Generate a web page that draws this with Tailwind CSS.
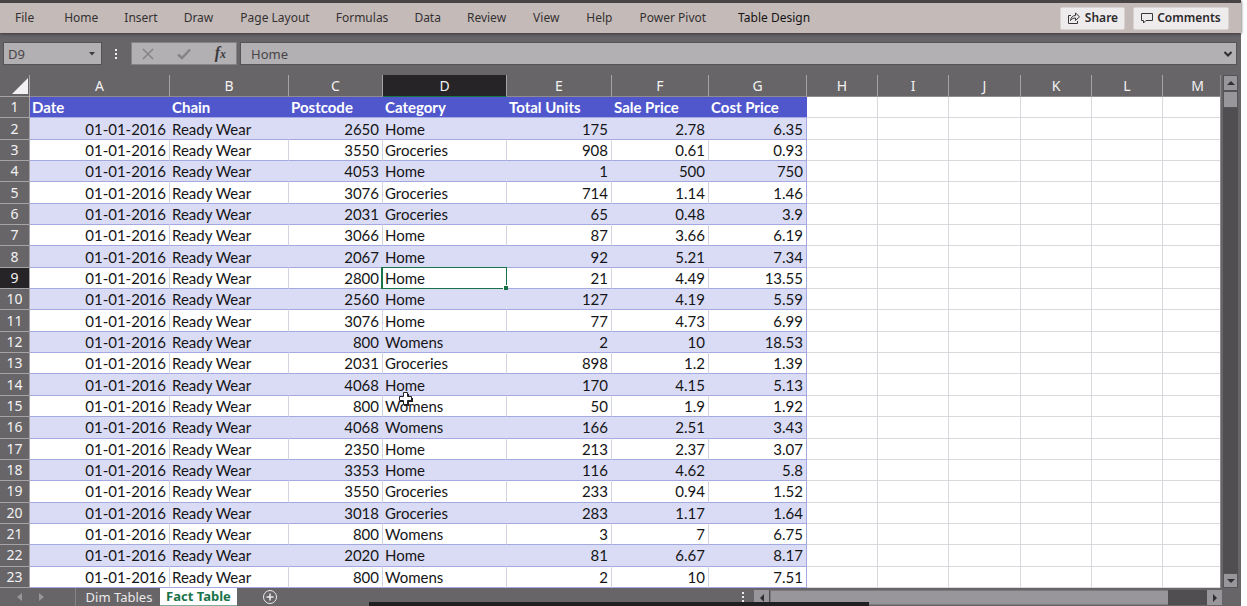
<!DOCTYPE html>
<html lang="en">
<head>
<meta charset="utf-8">
<title>Fact Table</title>
<script src="https://cdn.jsdelivr.net/npm/@tailwindcss/browser@4"></script>
</head>
<body class="h-screen overflow-hidden bg-white pr-1.5 font-['Noto_Sans',sans-serif]">
<div class="relative flex h-full flex-col bg-[#676567]">
  <header class="flex h-[33px] shrink-0 items-center border-t-3 border-[#484446] bg-[#c4bbb8] pr-3 pl-[15px] text-xs text-[#353132] shadow-[0_1px_3px_#3b393b]">
    <nav class="flex flex-1 items-center gap-[26px] whitespace-nowrap" aria-label="Ribbon">
      <a href="#" class="mr-1">File</a>
      <a href="#">Home</a>
      <a href="#">Insert</a>
      <a href="#">Draw</a>
      <a href="#" class="ml-px">Page Layout</a>
      <a href="#">Formulas</a>
      <a href="#">Data</a>
      <a href="#">Review</a>
      <a href="#" class="ml-px">View</a>
      <a href="#" class="ml-px">Help</a>
      <a href="#" class="ml-px">Power Pivot</a>
      <a href="#" class="ml-1.5 text-[#151314]">Table Design</a>
    </nav>
    <div class="flex gap-2 font-semibold text-[#2c292b]">
      <button class="flex h-[23px] w-[65px] items-center justify-center gap-1 rounded-xs border border-[#d8d2d0] bg-[#edebeb]">
        <svg class="size-3.5" viewBox="0 0 14 14" fill="none" stroke="#3a3739" stroke-width="1"><path d="M4 4.500H1.500v8h9V10"/><path d="M3.500 9.500C4 6 6 4.500 8.500 4.500V2l4 3.800-4 3.700V7C6.500 7 5 7.500 3.500 9.500z"/></svg>
        Share
      </button>
      <button class="flex h-[23px] w-24 items-center justify-center gap-1 rounded-xs border border-[#d8d2d0] bg-[#edebeb]">
        <svg class="size-3" viewBox="0 0 12 12" fill="none" stroke="#3a3739" stroke-width="1"><path d="M.5 1.500h11v7H5l-2.500 2.500V8.500h-2z"/></svg>
        Comments
      </button>
    </div>
  </header>

  <div class="mt-[9px] mb-[10px] flex h-[23px] shrink-0 items-stretch pr-1 pl-[3px] text-[13px] text-[#474547]">
    <div class="flex w-[99px] items-center border border-[#555355] bg-[#b2b0b3] pr-1">
      <input aria-label="Name box" value="D9" class="w-0 flex-1 bg-transparent pt-0.5 pl-1 outline-none">
      <button aria-label="Choose name" class="p-0.5"><svg class="h-1 w-1.5" viewBox="0 0 6 4" fill="#3f3d3f"><path d="M0 0h6L3 3.500z"/></svg></button>
    </div>
    <div class="flex w-[27px] items-center justify-center"><svg class="h-3 w-1" viewBox="0 0 4 12" fill="#f2f0f2"><path d="M1 1h2v2H1zM1 5h2v2H1zM1 9h2v2H1z"/></svg></div>
    <div class="ml-[2px] flex w-[106px] items-center justify-between border border-[#858386] bg-[#b2b0b3] px-2.5">
      <button aria-label="Cancel"><svg class="size-3" viewBox="0 0 12 12" fill="none" stroke="#858386" stroke-width="1.500"><path d="M1 1l10 10M11 1L1 11"/></svg></button>
      <button aria-label="Enter"><svg class="h-3 w-3.5" viewBox="0 0 14 12" fill="none" stroke="#858386" stroke-width="2.500"><path d="M1 6.500l4 3.500L13 1.500"/></svg></button>
      <button aria-label="Insert function" class="font-['Liberation_Serif',serif] text-base leading-4 font-bold text-[#3b393b] italic">f<span class="text-xs">x</span></button>
    </div>
    <div class="ml-[3px] flex flex-1 items-center border border-[#555355] bg-[#b2b0b3] pr-1">
      <input aria-label="Formula bar" value="Home" class="w-0 flex-1 bg-transparent pt-0.5 pl-2.5 outline-none">
      <button aria-label="Expand formula bar"><svg class="h-1.5 w-2" viewBox="0 0 8 6" fill="none" stroke="#302e30" stroke-width="2"><path d="M.5 1L4 4.500 7.500 1"/></svg></button>
    </div>
  </div>

  <main class="flex min-h-0 flex-1">
    <div class="relative min-w-0 flex-1 overflow-hidden border-r border-[#8e8c8e]">
      <table class="h-full w-[1233px] table-fixed border-separate border-spacing-0 font-[Lato,sans-serif] text-[15px] leading-5 text-[#151517]">
        <colgroup>
          <col class="w-[30px]"><col class="w-[140px]"><col class="w-[119px]"><col class="w-[94px]"><col class="w-[124px]"><col class="w-[105px]"><col class="w-[97px]"><col class="w-[98px]"><col class="w-[71px]"><col class="w-[71px]"><col class="w-[72px]"><col class="w-[71px]"><col class="w-[71px]"><col class="w-[70px]">
        </colgroup>
        <thead class="font-['Noto_Sans',sans-serif] text-sm text-[#f3f1f3]"><tr id="letters"></tr></thead>
        <tbody id="rows"></tbody>
      </table>
      <svg class="absolute top-[316px] left-[398px] size-4" viewBox="0 0 16 16" aria-hidden="true"><path d="M6 3h5v4h4v4h-4v4H6v-4H2V7h4z" fill="#222"/><path d="M5.500 1.500h4v4h4v4h-4v4h-4v-4h-4v-4h4z" fill="#fff" stroke="#222"/></svg>
    </div>
    <div class="mr-[3px] ml-[2px] flex w-[15px] flex-col bg-[#504e50]">
      <button aria-label="Scroll up" class="flex h-4 items-center justify-center bg-[#98969a] ring-1 ring-[#555355] ring-inset"><svg class="h-1 w-2" viewBox="0 0 8 4" fill="#302e30"><path d="M0 4h8L4 0z"/></svg></button>
      <div class="h-[17px] border border-[#555355] bg-[#98969a]"></div>
      <div class="flex-1"></div>
      <button aria-label="Scroll down" class="flex h-[15px] items-center justify-center bg-[#98969a] ring-1 ring-[#555355] ring-inset"><svg class="h-1 w-2" viewBox="0 0 8 4" fill="#302e30"><path d="M0 0h8L4 4z"/></svg></button>
    </div>
  </main>

  <footer class="flex h-[18px] shrink-0 items-stretch pr-[19px] text-[13px] text-[#ebe9eb]">
    <div class="flex w-[76px] items-center gap-4 border-r border-[#858386] pl-[17px]">
      <button aria-label="Previous sheet"><svg class="h-2 w-1.5" viewBox="0 0 6 8" fill="#98969a"><path d="M5 0v8L0 4z"/></svg></button>
      <button aria-label="Next sheet"><svg class="h-2 w-1.5" viewBox="0 0 6 8" fill="#98969a"><path d="M0 0v8l5-4z"/></svg></button>
    </div>
    <button class="w-[84px] pb-px pl-[2px] leading-[16px] whitespace-nowrap">Dim Tables</button>
    <button class="w-[77px] border-b border-[#7fae98] bg-white pb-px leading-[16px] font-bold whitespace-nowrap text-[#1a7348]">Fact Table</button>
    <button aria-label="New sheet" class="ml-[25px] flex items-center"><svg class="size-4" viewBox="0 0 16 16" fill="none" stroke="#ebe9eb"><circle cx="8" cy="8" r="6.500"/><path d="M8 4.500v7M4.500 8h7" stroke-width="1.500"/></svg></button>
    <div class="flex-1"></div>
    <div class="flex w-[13px] items-center"><svg class="h-3 w-1" viewBox="0 0 4 12" fill="#ebe9eb"><path d="M1 1h2v2H1zM1 5h2v2H1zM1 9h2v2H1z"/></svg></div>
    <div class="mt-[2px] mb-[1px] flex w-[468px] bg-[#504e50]">
      <button aria-label="Scroll left" class="flex w-4 items-center justify-center border-r border-[#504e50] bg-[#98969a]"><svg class="h-2 w-1" viewBox="0 0 4 8" fill="#302e30"><path d="M4 0v8L0 4z"/></svg></button>
      <div class="w-[398px] border border-r-0 border-[#7b797c] bg-[#98969a]"></div>
      <div class="flex-1"></div>
      <button aria-label="Scroll right" class="flex w-[15px] items-center justify-center bg-[#98969a]"><svg class="h-2 w-1" viewBox="0 0 4 8" fill="#302e30"><path d="M0 0v8l4-4z"/></svg></button>
    </div>
  </footer>
  <div class="absolute bottom-0 left-[369px] h-1 w-[500px] bg-[#211f21]"></div>
</div>
<script>
const data = `2650 Home 175 2.78 6.35
3550 Groceries 908 0.61 0.93
4053 Home 1 500 750
3076 Groceries 714 1.14 1.46
2031 Groceries 65 0.48 3.9
3066 Home 87 3.66 6.19
2067 Home 92 5.21 7.34
2800 Home 21 4.49 13.55
2560 Home 127 4.19 5.59
3076 Home 77 4.73 6.99
800 Womens 2 10 18.53
2031 Groceries 898 1.2 1.39
4068 Home 170 4.15 5.13
800 Womens 50 1.9 1.92
4068 Womens 166 2.51 3.43
2350 Home 213 2.37 3.07
3353 Home 116 4.62 5.8
3550 Groceries 233 0.94 1.52
3018 Groceries 283 1.17 1.64
800 Womens 3 7 6.75
2020 Home 81 6.67 8.17
800 Womens 2 10 7.51`.split('\n').map(line => ['01-01-2016', 'Ready Wear', ...line.split(' ')]);

const corner = '<th class="h-[21px] border-r border-b border-[#a5a3a5] p-0"><svg class="ml-auto size-[18px]" viewBox="0 0 18 18" fill="#f3f1f3" aria-label="Select all"><path d="M17 1v16H1z"/></svg></th>';
document.getElementById('letters').innerHTML = corner + [...'ABCDEFGHIJKLM'].map(c =>
  `<th scope="col" class="border-r border-b p-0 pt-px font-normal ${c === 'D' ? 'border-r-[#a5a3a5] border-b-[#1a7348] bg-[#262426]' : 'border-r-[#a5a3a5] border-b-[#8e8c8e]'}">${c}</th>`).join('');

const blank = '<td class="border-r border-b border-[#dad8dc] bg-white p-0"></td>'.repeat(6);
const rowHead = n => `<th scope="row" class="border-r border-b border-[#a5a3a5] p-0 font-['Noto_Sans',sans-serif] text-sm leading-5 font-normal text-[#f3f1f3] ${n === 9 ? 'bg-[#262426]' : ''}">${n}</th>`;
const titles = ['Date', 'Chain', 'Postcode', 'Category', 'Total Units', 'Sale Price', 'Cost Price'];
let html = '<tr>' + rowHead(1) + titles.map(t =>
  `<th scope="col" class="border-b border-[#a4a9e0] bg-[#5057cd] p-0 pl-[2px] text-left font-bold whitespace-nowrap text-white">${t}</th>`).join('') + blank + '</tr>';
data.forEach((row, i) => {
  const n = i + 2, banded = n % 2 === 0;
  html += '<tr>' + rowHead(n) + row.map((v, c) => {
    const align = c === 1 || c === 3 ? 'pl-[2px] text-left' : 'pr-[3px] text-right';
    const fill = banded ? 'bg-[#dadcf5] border-r-[#dadcf5]' : 'bg-white border-r-[#d3d4e3]';
    const edge = c === 6 ? 'border-r-[#a4a9e0]!' : '';
    const selected = n === 9 && c === 3;
    const mark = selected ? '<span class="absolute -inset-[1px] -left-[2px] border-[1px] border-[#1a7348] border-l-2"><span class="absolute -right-[2px] -bottom-[2px] size-[5px] border-t border-l border-white bg-[#1a7348]"></span></span>' : '';
    return `<td class="${selected ? 'relative z-10' : ''} border-r border-b border-b-[#a4a9e0] p-0 whitespace-nowrap ${align} ${fill} ${edge}">${v}${mark}</td>`;
  }).join('') + blank + '</tr>';
});
document.getElementById('rows').innerHTML = html;
</script>
</body>
</html>
